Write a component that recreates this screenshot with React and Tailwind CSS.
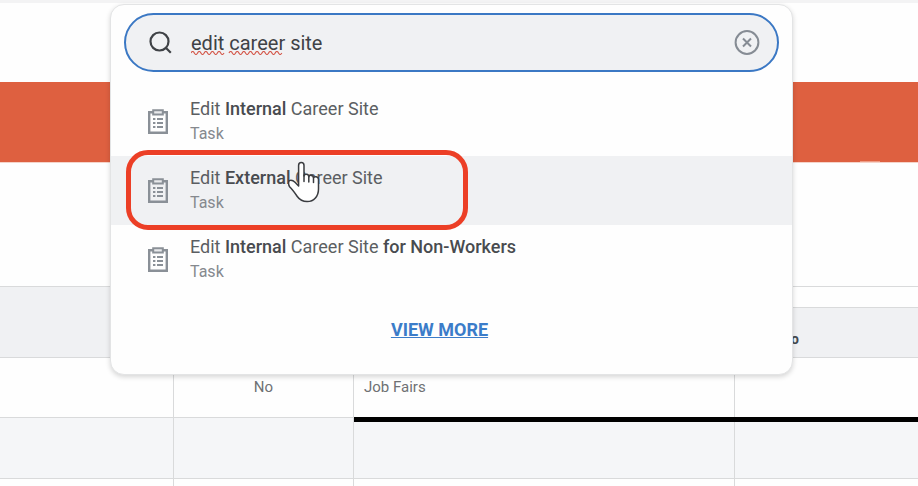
import React, { useState } from "react";

const results = [
  {
    id: "internal",
    parts: [
      { text: "Edit " },
      { text: "Internal", bold: true },
      { text: " Career Site" },
    ],
  },
  {
    id: "external",
    active: true,
    parts: [
      { text: "Edit " },
      { text: "External", bold: true },
      { text: " Career Site" },
    ],
  },
  {
    id: "non-workers",
    parts: [
      { text: "Edit " },
      { text: "Internal", bold: true },
      { text: " Career Site " },
      { text: "for Non-Workers", bold: true },
    ],
  },
];

function TaskIcon() {
  return (
    <svg className="h-[25px] w-5 shrink-0" viewBox="0 0 20 25" fill="none" aria-hidden="true">
      <path d="M1.2 3.2h17.6v20.6H1.2z" stroke="#8a9097" strokeWidth="2.4" />
      <path d="M5.2 1.2h9.6v4.2H5.2z" fill="#e9eaec" stroke="#8a9097" strokeWidth="2" />
      <path
        d="M5 10h2.4M9 10h6M5 14h2.4M9 14h6M5 18h2.4M9 18h6"
        stroke="#8a9097"
        strokeWidth="2"
      />
    </svg>
  );
}

function SearchIcon() {
  return (
    <svg className="h-6 w-6 shrink-0" viewBox="0 0 24 24" fill="none" stroke="#3f4246" strokeWidth="2.2" aria-hidden="true">
      <circle cx="10.5" cy="10.5" r="9" />
      <path d="M17 17l4.800 4.800" />
    </svg>
  );
}

function ClearIcon() {
  return (
    <svg className="h-[26px] w-[26px]" viewBox="0 0 26 26" fill="none" stroke="#868c94" strokeWidth="2" aria-hidden="true">
      <circle cx="13" cy="12.5" r="11.4" />
      <path d="M9 8.500l8 8M17 8.500l-8 8" />
    </svg>
  );
}

// Spell-check marks under the first two words
function Squiggles() {
  return (
    <svg className="pointer-events-none absolute bottom-0 left-0 h-1 w-24" viewBox="0 0 96 4" fill="none" stroke="#d4584a" strokeWidth="1.2" aria-hidden="true">
      <path d="M0 2q1.65-3 3.3 0t3.3 0t3.3 0t3.3 0t3.3 0t3.3 0t3.3 0t3.3 0t3.3 0t3.3 0" />
      <path d="M38 2q1.65-3 3.3 0t3.3 0t3.3 0t3.3 0t3.3 0t3.3 0t3.3 0t3.3 0t3.3 0t3.3 0t3.3 0t3.3 0t3.3 0t3.3 0t3.3 0t3.3 0" />
    </svg>
  );
}

function HandCursor() {
  return (
    <svg className="pointer-events-none absolute top-[5px] left-[177px] h-[42px] w-8" viewBox="0 0 32 42" aria-hidden="true">
      <path
        d="M10.6 25V4.4C10.6.6 16 .6 16 4.4V15c.3-2.6 4.8-2.2 4.8.8.5-2.3 4.7-1.8 4.7 1 .6-1.9 5-1.4 5 1.6V28c0 7.2-4.5 12.6-11.4 12.6-4.8 0-7.5-1.8-9.8-5.1-2.6-3.8-4.500-6.700-7.500-9.500C.6 24.2.4 21.2 1.2 19.6c1.6-.6 3.9-.2 5.8 1.7z"
        fill="#fff"
        stroke="#3a3c40"
        strokeWidth="1.5"
        strokeLinejoin="round"
      />
      <path d="M16 14v6.500M20.8 15.5V21M25.5 16.5v5" stroke="#3a3c40" strokeWidth="1.5" strokeLinecap="round" />
    </svg>
  );
}

function ResultRow({ result }) {
  return (
    <li className={result.active ? "relative bg-[#f0f1f3]" : "relative"}>
      <button type="button" className="flex w-full items-center gap-[22px] pt-[9px] pb-[10px] pl-[37px] text-left">
        <TaskIcon />
        <span className="flex flex-col text-[#5b5e62]">
          <span className="text-lg leading-[25px]">
            {result.parts.map((part) => (
              <span key={part.text} className={part.bold ? "font-medium text-[#484b4f]" : ""}>
                {part.text}
              </span>
            ))}
          </span>
          <span className="text-base leading-[25px] text-[#85898e]">Task</span>
        </span>
      </button>
      {result.active && (
        <>
          <div className="pointer-events-none absolute -top-1.5 left-[15px] h-20 w-[342px] rounded-[22px] border-5 border-[#ec3f26]" />
          <HandCursor />
        </>
      )}
    </li>
  );
}

function SearchPanel() {
  const [query, setQuery] = useState("edit career site");

  return (
    <section className="absolute top-[4px] right-[125px] left-[110px] rounded-[14px] border border-[#e3e4e5] bg-[#fefefe] pt-2 shadow-[0_2px_5px_rgba(0,0,0,0.16)]">
      <div className="mx-[13px] flex h-[59px] items-center rounded-full border-2 border-[#3b78c4] bg-[#f0f1f3] pr-[17px] pl-[23px]">
        <SearchIcon />
        <div className="relative ml-[18px] flex-1">
          <input
            type="text"
            aria-label="Search"
            spellCheck={false}
            value={query}
            onChange={(e) => setQuery(e.target.value)}
            className="block h-[25px] w-full bg-transparent text-xl text-[#3f4246] outline-none"
          />
          <Squiggles />
        </div>
        <button type="button" aria-label="Clear search" onClick={() => setQuery("")}>
          <ClearIcon />
        </button>
      </div>
      <ul className="mt-[15px]">
        {results.map((result) => (
          <ResultRow key={result.id} result={result} />
        ))}
      </ul>
      <div className="flex justify-center pt-6 pr-6 pb-8">
        <a href="#more" className="text-lg leading-6 font-bold text-[#3b7cc9] underline">
          VIEW MORE
        </a>
      </div>
    </section>
  );
}

function JobTable() {
  return (
    <table className="w-full table-fixed border-separate border-spacing-0 text-[15px] text-[#6f7174]">
      <colgroup>
        <col className="w-[174px]" />
        <col className="w-[180px]" />
        <col className="w-[381px]" />
        <col />
      </colgroup>
      <thead className="text-sm">
        <tr className="h-[21px]">
          <th rowSpan={2} className="border-t border-r border-[#d9dadb] bg-[#f0f1f3]" />
          <th rowSpan={2} className="border-t border-r border-[#d9dadb] bg-[#f0f1f3]" />
          <th rowSpan={2} className="border-t border-r border-[#d9dadb] bg-[#f0f1f3]" />
          <th className="border-t border-[#d9dadb]" />
        </tr>
        <tr className="h-[50px]">
          <th className="border-t border-[#d9dadb] bg-[#f0f1f3] pt-3 pl-14 text-left font-bold text-[#45494e]">o</th>
        </tr>
      </thead>
      <tbody>
        <tr className="h-[60px]">
          <td className="border-t border-r border-[#d9dadb]" />
          <td className="border-t border-r border-[#d9dadb] text-center">No</td>
          <td className="border-t border-r border-[#d9dadb] pl-[10px]">Job Fairs</td>
          <td className="border-t border-[#d9dadb]" />
        </tr>
        <tr className="h-[61px] bg-[#f5f6f8]">
          <td className="border-t border-r border-[#d9dadb]" />
          <td className="border-t border-r border-[#d9dadb]" />
          <td className="relative border-t border-r border-[#d9dadb]">
            {/* heavy rule running over the last two columns */}
            <div className="absolute -top-px left-0 h-[5px] w-screen bg-black" />
          </td>
          <td className="border-t border-[#d9dadb]" />
        </tr>
        <tr className="h-[60px]">
          <td className="border-t border-r border-[#d9dadb]" />
          <td className="border-t border-r border-[#d9dadb]" />
          <td className="border-t border-r border-[#d9dadb]" />
          <td className="border-t border-[#d9dadb]" />
        </tr>
      </tbody>
    </table>
  );
}

export default function App() {
  return (
    <div className="relative h-screen overflow-hidden bg-[#fefefe] font-[Roboto,sans-serif]">
      <header className="h-[82px] border-t-3 border-[#f3f3f4]" />
      <div className="flex h-[81px] items-end justify-end border-b border-[#f5d3c9] bg-[#de6040] pr-[38px]">
        <span className="h-px w-5 bg-[#ee9c85]" />
      </div>
      <main className="pt-[123px]">
        <JobTable />
      </main>
      <SearchPanel />
    </div>
  );
}
